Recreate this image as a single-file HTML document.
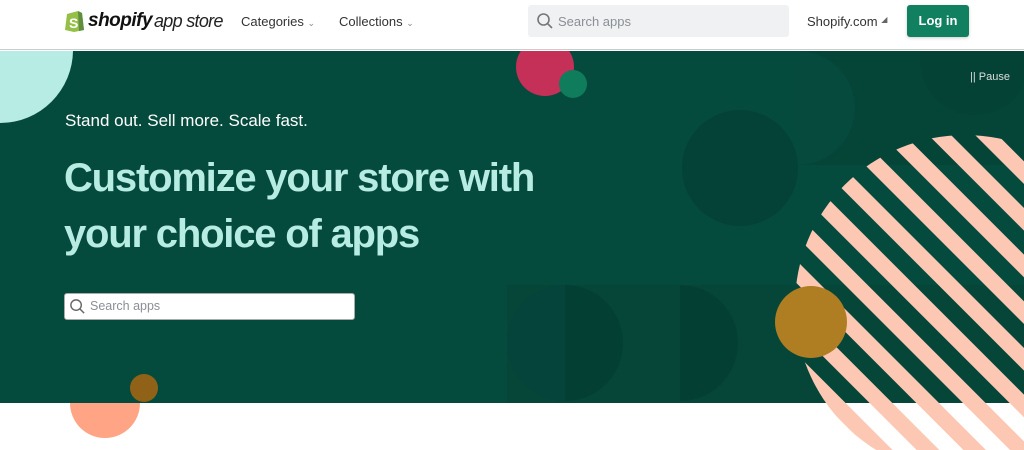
<!DOCTYPE html>
<html><head><meta charset="utf-8"><style>
*{margin:0;padding:0;box-sizing:border-box}
body{width:1024px;height:450px;overflow:hidden;background:#fff;font-family:"Liberation Sans",sans-serif;position:relative}
.hdr{position:absolute;left:0;top:0;width:1024px;height:50px;background:#fff;border-bottom:1px solid #ccc;z-index:5}
.abs{position:absolute}
</style></head><body>
<svg class="abs" style="left:0;top:0;z-index:1" width="1024" height="450">
<defs>
<clipPath id="hero"><rect x="0" y="51" width="1024" height="352"/></clipPath>
<clipPath id="sc"><circle cx="965" cy="305" r="170"/></clipPath>
<pattern id="st" width="33" height="33" patternUnits="userSpaceOnUse" patternTransform="rotate(-45)">
<rect x="0" y="0" width="16" height="33" fill="#fcc8b4"/></pattern>
</defs>
<circle cx="105" cy="403" r="35" fill="#ffa585"/>
<g clip-path="url(#hero)">
<rect x="0" y="51" width="1024" height="352" fill="#054b3d"/>
<rect x="798" y="51" width="226" height="114" fill="#044538"/>
<path d="M798 51 A57 57 0 0 1 798 165 Z" fill="#054a3d"/>
<circle cx="740" cy="168" r="58" fill="#044238"/>
<rect x="507" y="285" width="517" height="118" fill="#054639"/>
<circle cx="565" cy="343" r="58" fill="#05443a"/>
<path d="M565 285 A58 58 0 0 1 565 401 Z" fill="#043f34"/>
<path d="M680 285 A58 58 0 0 1 680 401 Z" fill="#043f34"/>
<circle cx="975" cy="60" r="55" fill="#044236"/>
<circle cx="0" cy="50" r="73" fill="#b6ece4"/>
<circle cx="545" cy="67" r="29" fill="#c43057"/>
<circle cx="573" cy="84" r="14" fill="#0f7d5c"/>
</g>
<rect x="780" y="120" width="260" height="340" fill="url(#st)" clip-path="url(#sc)"/>
<circle cx="811" cy="322" r="36" fill="#b07e22"/>
<circle cx="144" cy="388" r="14" fill="#906218"/>
</svg>
<div class="hdr">
<svg class="abs" style="left:65px;top:9px" width="20" height="23" viewBox="0 0 20 23"><path d="M2 5 L13 2 L17 4 L19 21 L9 23 L0 21 Z" fill="#95bf47"/><path d="M13 2 L17 4 L19 21 L14 22 Z" fill="#5e8e3e"/><text x="4" y="19" font-size="14" font-weight="bold" fill="#fff" font-family="Liberation Sans">S</text></svg>
<div class="abs" style="left:88px;top:10px;font-size:19px;font-weight:bold;font-style:italic;color:#111;letter-spacing:-0.5px">shopify</div>
<div class="abs" style="left:154px;top:11px;font-size:18px;font-style:italic;color:#222;letter-spacing:-0.7px">app store</div>
<div class="abs" style="left:241px;top:14px;font-size:13px;color:#333">Categories <span style="font-size:9px;color:#888">&#8964;</span></div>
<div class="abs" style="left:339px;top:14px;font-size:13px;color:#333">Collections <span style="font-size:9px;color:#888">&#8964;</span></div>
<div class="abs" style="left:528px;top:5px;width:261px;height:32px;background:#f0f1f2;border-radius:3px"></div>
<svg class="abs" style="left:536px;top:12px" width="18" height="18" viewBox="0 0 18 18"><circle cx="7.5" cy="7.5" r="5.5" fill="none" stroke="#777" stroke-width="1.6"/><path d="M11.5 11.5L16 16" stroke="#777" stroke-width="1.6"/></svg>
<div class="abs" style="left:558px;top:14px;font-size:13px;color:#8a8f95">Search apps</div>
<div class="abs" style="left:807px;top:14px;font-size:13px;color:#333">Shopify.com <span style="font-size:8px;color:#666;vertical-align:4px">&#9698;</span></div>
<div class="abs" style="left:907px;top:5px;width:62px;height:32px;background:#108060;border-radius:3px;color:#fff;font-size:13px;font-weight:bold;text-align:center;line-height:32px;box-shadow:0 1px 3px rgba(0,0,0,.2)">Log in</div>
</div>
<div class="abs" style="z-index:3;left:65px;top:111px;font-size:17px;color:#fff">Stand out. Sell more. Scale fast.</div>
<div class="abs" style="z-index:3;left:64px;top:150px;font-size:40px;font-weight:bold;color:#b7ece3;line-height:56px;letter-spacing:-1.2px">Customize your store with<br>your choice of apps</div>
<div class="abs" style="z-index:3;left:64px;top:293px;width:291px;height:27px;background:#fff;border:1px solid #aaa;border-radius:3px"></div>
<svg class="abs" style="z-index:4;left:69px;top:298px" width="17" height="17" viewBox="0 0 18 18"><circle cx="7.5" cy="7.5" r="5.5" fill="none" stroke="#666" stroke-width="1.5"/><path d="M11.5 11.5L16 16" stroke="#666" stroke-width="1.5"/></svg>
<div class="abs" style="z-index:4;left:90px;top:299px;font-size:12.5px;color:#8a8f95">Search apps</div>
<div class="abs" style="z-index:3;left:970px;top:71px;font-size:11px;color:#ddd">|| Pause</div>
</body></html>
